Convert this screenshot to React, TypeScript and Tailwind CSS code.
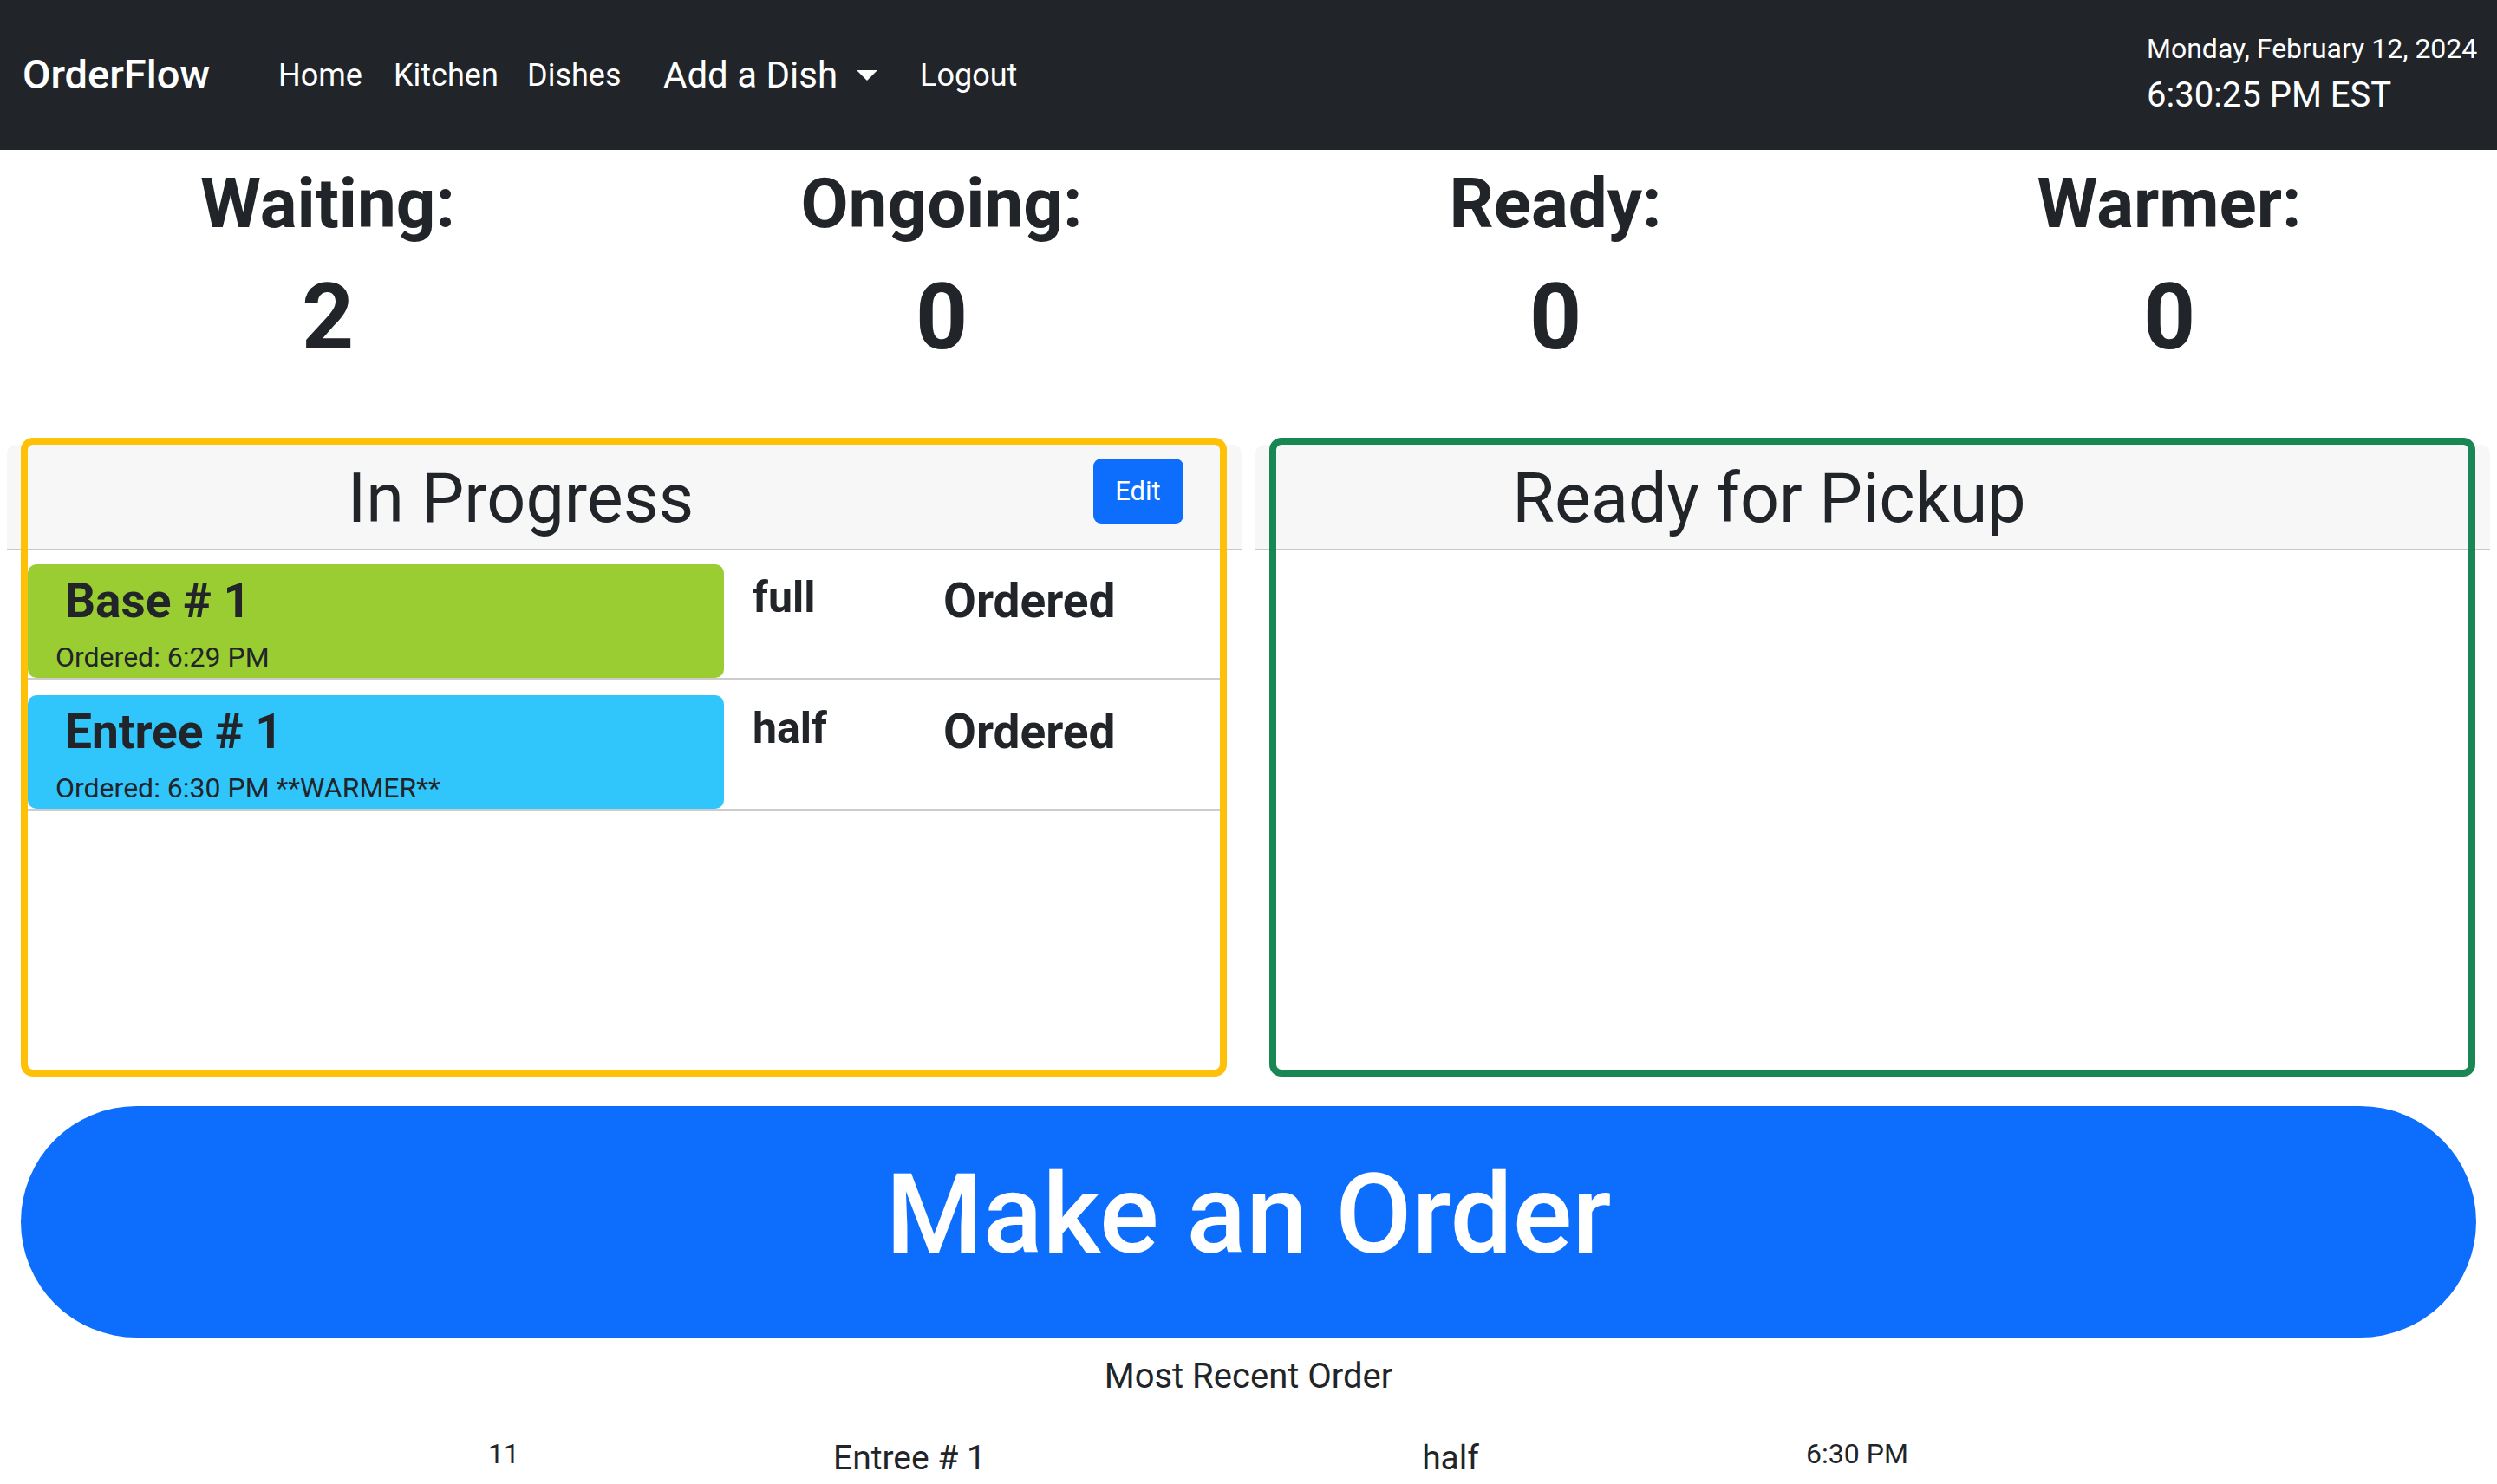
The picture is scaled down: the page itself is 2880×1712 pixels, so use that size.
import React from "react";

const font = { fontFamily: "Roboto, 'Noto Sans', Arial, sans-serif" };

function Row({ color, title, sub, qty }: { color: string; title: string; sub: string; qty: string }) {
  return (
    <div className="flex items-start pt-[17px] border-b-[3px] border-[#cccccc]">
      <div className={`w-[803px] h-[131px] rounded-[10px] ${color} flex flex-col justify-between pt-[15px] pb-[8px]`}>
        <div className="pl-[43px] text-[55px] font-bold leading-none text-[#212529]">{title}</div>
        <div className="pl-[32px] text-[32px] leading-none text-[#212529]">{sub}</div>
      </div>
      <div className="ml-[33px] w-[220px] pt-[13px] text-[50px] font-bold leading-none text-[#212529]">{qty}</div>
      <div className="pt-[15px] text-[55px] font-bold leading-none text-[#212529]">Ordered</div>
    </div>
  );
}

function Card({ title, border, edit, children }: { title: string; border: string; edit?: boolean; children?: React.ReactNode }) {
  return (
    <div className="relative flex-1 h-[737px]">
      <div className="pt-[8px]">
        <div className="flex items-start h-[121px] bg-[#f7f7f7] rounded-t-[10px] border-b border-[#c8c8c8]">
          <div className="w-[1185px] pt-[15px] text-center text-[79px] leading-[1.2] text-[#212529]">{title}</div>
          <div className="flex-1 flex justify-center">
            {edit && (
              <button className="mt-[16px] w-[104px] h-[75px] rounded-[9px] bg-[#0d6efd] text-white text-[31px] leading-none">
                Edit
              </button>
            )}
          </div>
        </div>
        <div className="px-[24px]">{children}</div>
      </div>
      <div className={`pointer-events-none absolute left-[16px] right-[17px] top-0 bottom-0 border-[8px] rounded-[14px] ${border}`} />
    </div>
  );
}

export default function App() {
  return (
    <div style={font} className="w-[2880px] min-h-[1712px] bg-white text-[#212529]">
      {/* Navbar */}
      <nav className="h-[173px] bg-[#212529] flex items-center text-white">
        <div className="ml-[26px] w-[295px] text-[47px] font-medium leading-[1.5]">OrderFlow</div>
        <div className="w-[133px] text-[36px] leading-[1.5]">Home</div>
        <div className="w-[154px] text-[36px] leading-[1.5]">Kitchen</div>
        <div className="w-[157px] text-[36px] leading-[1.5]">Dishes</div>
        <div className="w-[296px] flex items-center text-[42px] leading-[1.5]">
          <span>Add a Dish</span>
          <span className="ml-[22px] w-0 h-0 border-l-[12px] border-r-[12px] border-t-[12px] border-l-transparent border-r-transparent border-t-white" />
        </div>
        <div className="text-[36px] leading-[1.5]">Logout</div>
        <div className="ml-auto w-[404px] flex flex-col">
          <div className="text-[32px] leading-[1.45]">Monday, February 12, 2024</div>
          <div className="text-[40px] leading-[1.5]">6:30:25 PM EST</div>
        </div>
      </nav>

      {/* Stats */}
      <div className="grid grid-cols-4 px-[24px] pt-[14px] text-center">
        {[
          ["Waiting:", "2"],
          ["Ongoing:", "0"],
          ["Ready:", "0"],
          ["Warmer:", "0"],
        ].map(([l, n]) => (
          <div key={l} className="flex flex-col items-center">
            <div className="text-[80px] font-bold leading-[1.2]">{l}</div>
            <div className="mt-[21px] text-[105px] font-bold leading-[1.2]">{n}</div>
          </div>
        ))}
      </div>

      {/* Cards */}
      <div className="mt-[75px] px-[8px] flex gap-[16px]">
        <Card title="In Progress" border="border-[#ffc107]" edit>
          <Row color="bg-[#9acd32]" title="Base # 1" sub="Ordered: 6:29 PM" qty="full" />
          <Row color="bg-[#31c6fb]" title="Entree # 1" sub="Ordered: 6:30 PM **WARMER**" qty="half" />
        </Card>
        <Card title="Ready for Pickup" border="border-[#198754]" />
      </div>

      {/* Make an Order */}
      <div className="mt-[34px] mx-[24px]">
        <button className="w-full h-[267px] pb-[18px] rounded-full bg-[#0d6efd] text-white text-[128px] font-medium leading-none">
          Make an Order
        </button>
      </div>

      <div className="mt-[15px] text-center text-[40px] leading-[1.5]">Most Recent Order</div>

      <div className="mt-[35px] flex items-start pl-[347px]">
        <div className="w-[468px] text-center text-[32px] leading-[1.5]">11</div>
        <div className="w-[468px] text-center text-[39px] leading-[1.5]">Entree # 1</div>
        <div className="w-[780px] text-center text-[39px] leading-[1.5]">half</div>
        <div className="w-[158px] text-center text-[32px] leading-[1.5]">6:30 PM</div>
      </div>
    </div>
  );
}
